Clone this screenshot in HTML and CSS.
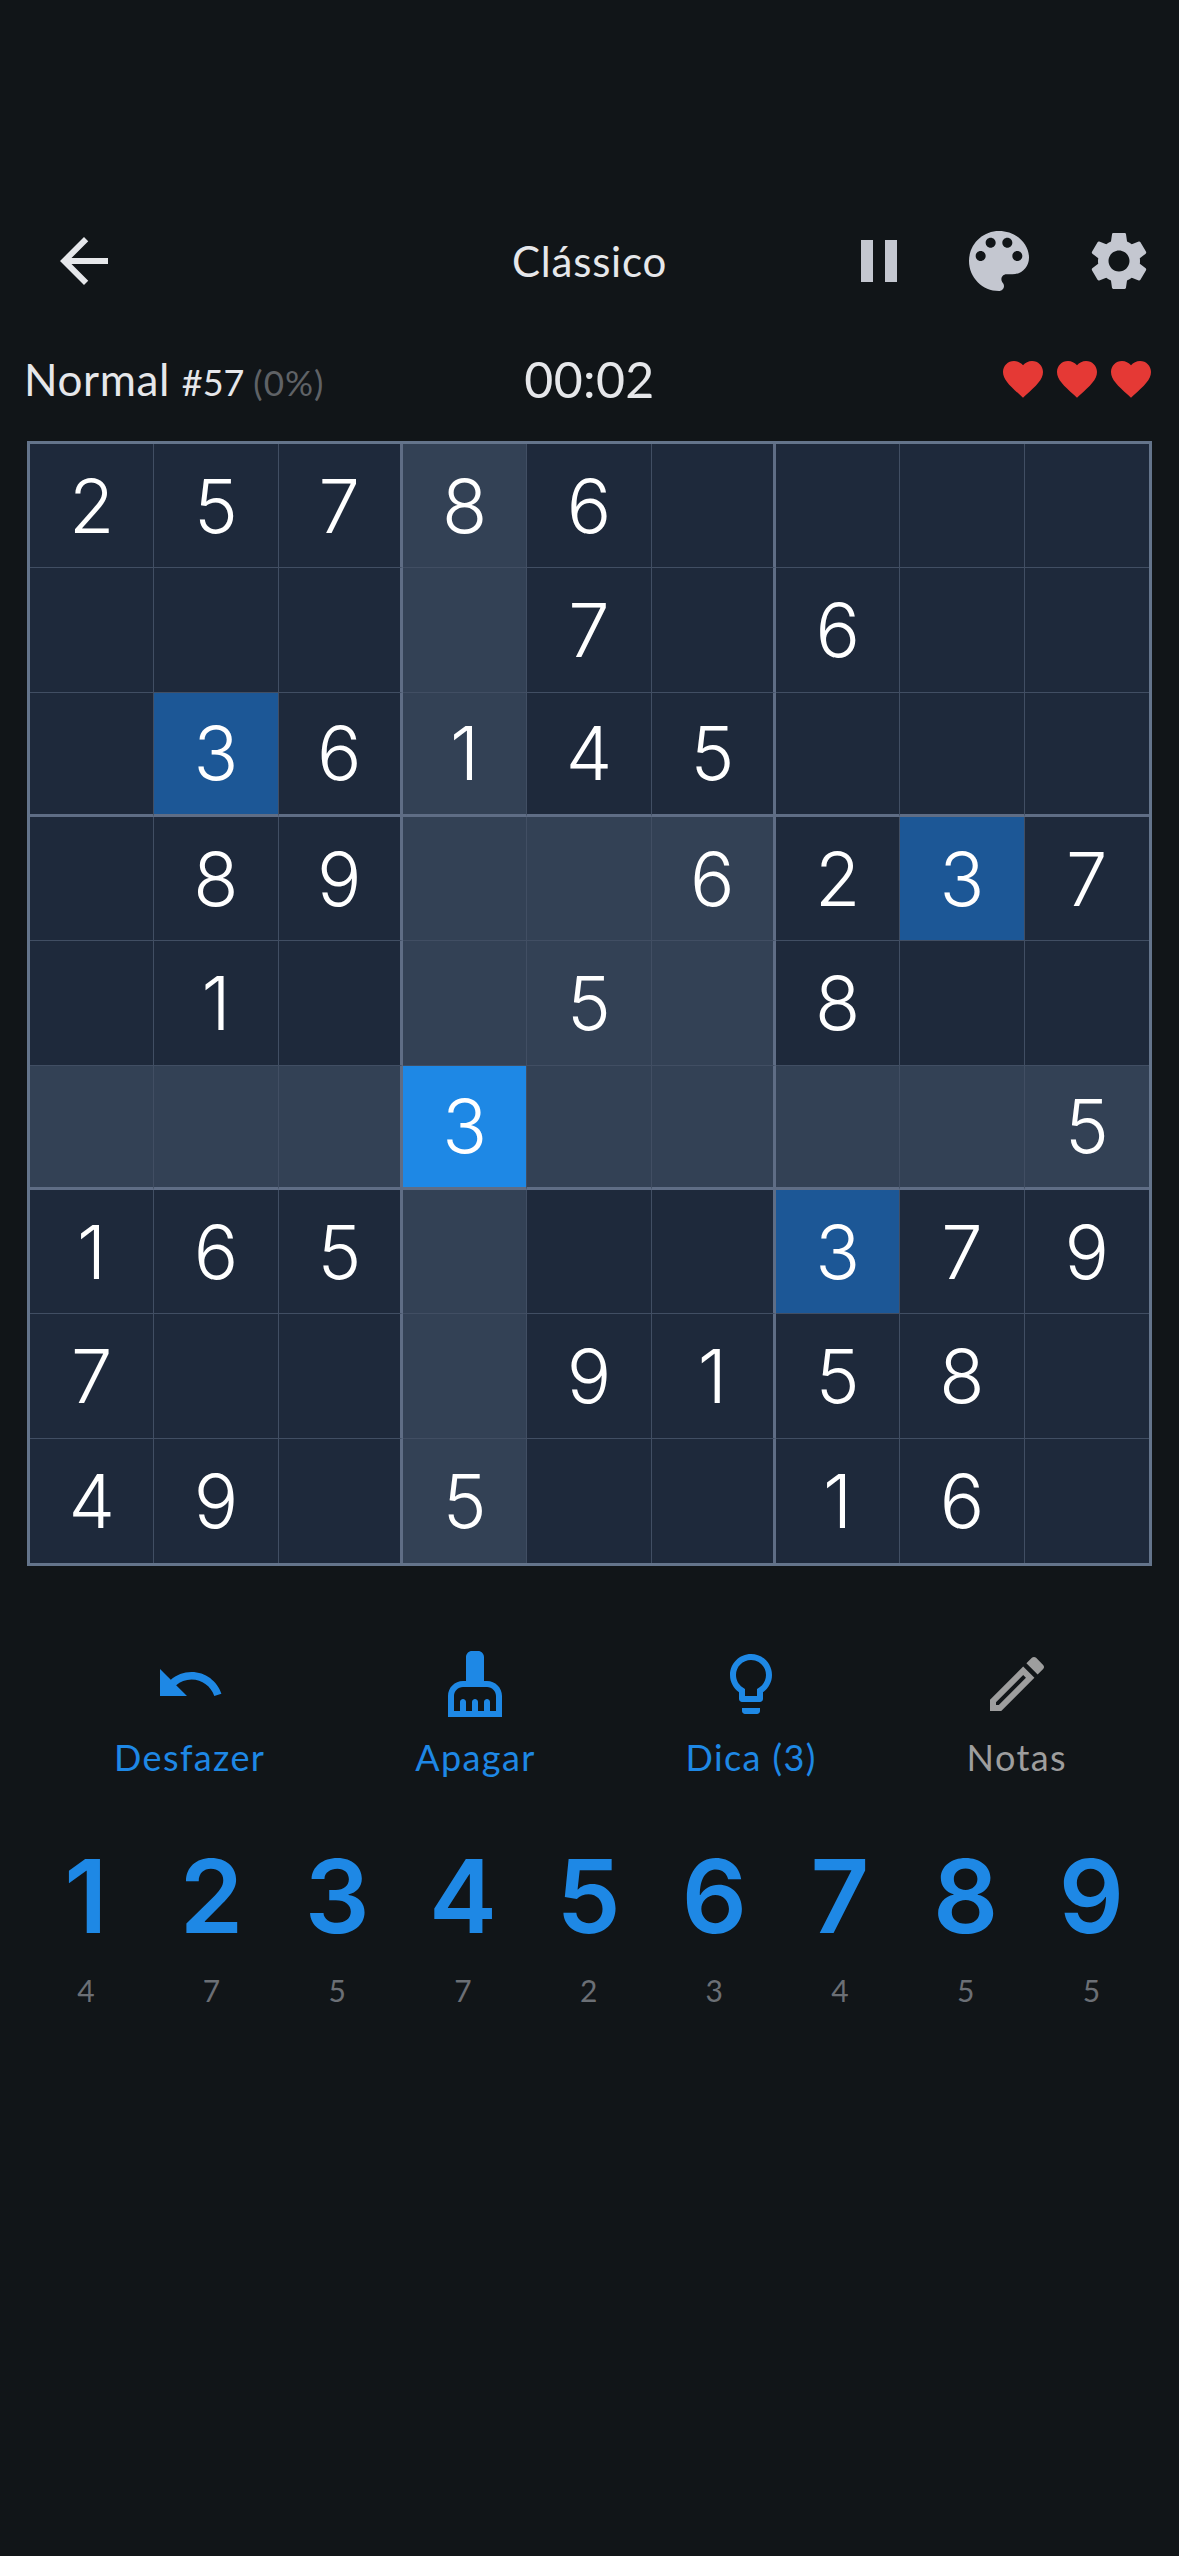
FILE: index.html
```html
<!DOCTYPE html>
<html lang="pt">
  <head>
    <meta charset="UTF-8" />
    <meta name="viewport" content="width=device-width, initial-scale=1.0" />
    <title>Sudoku</title>
    <link rel="stylesheet" href="styles.css">
  </head>
  <body>
    <header class="top-bar">
      <button class="icon-btn back-btn">
        <svg width="72" height="72" viewBox="0 0 24 24"><path d="M20 11H7.83l5.59-5.59L12 4l-8 8 8 8 1.41-1.41L7.83 13H20v-2z"/></svg>
      </button>
      <div class="title">Clássico</div>
      <div class="actions">
        <button class="icon-btn">
          <svg width="72" height="72" viewBox="0 0 24 24"><path d="M6 19h4V5H6v14zm8-14v14h4V5h-4z"/></svg>
        </button>
        <button class="icon-btn">
          <svg width="80" height="80" viewBox="0 0 24 24"><path d="M12 3c-4.97 0-9 4.03-9 9s4.03 9 9 9c.83 0 1.5-.67 1.5-1.5 0-.39-.15-.74-.39-1.01-.24-.26-.39-.61-.39-1 0-.83.67-1.5 1.5-1.5H16c2.76 0 5-2.24 5-5 0-4.42-4.03-8-9-8zm-5.5 9c-.83 0-1.5-.67-1.5-1.5S5.67 9 6.5 9 8 9.67 8 10.5 7.33 12 6.5 12zm3-4C8.67 8 8 7.33 8 6.5S8.67 5 9.5 5s1.5.67 1.5 1.5S10.33 8 9.5 8zm5 0c-.83 0-1.5-.67-1.5-1.5S13.67 5 14.5 5s1.5.67 1.5 1.5S15.33 8 14.5 8zm3 4c-.83 0-1.5-.67-1.5-1.5S16.67 9 17.5 9s1.5.67 1.5 1.5-.67 1.5-1.5 1.5z"/></svg>
        </button>
        <button class="icon-btn">
          <svg width="70" height="70" viewBox="0 0 24 24"><path d="M19.14 12.94c.04-.3.06-.61.06-.94 0-.32-.02-.64-.07-.94l2.03-1.58c.18-.14.23-.41.12-.61l-1.92-3.32c-.12-.22-.37-.29-.59-.22l-2.39.96c-.5-.38-1.03-.7-1.62-.94l-.36-2.54c-.04-.24-.24-.41-.48-.41h-3.84c-.24 0-.43.17-.47.41l-.36 2.54c-.59.24-1.13.57-1.62.94l-2.39-.96c-.22-.08-.47 0-.59.22L2.74 8.87c-.12.21-.08.47.12.61l2.03 1.58c-.05.3-.09.63-.09.94s.02.64.07.94l-2.03 1.58c-.18.14-.23.41-.12.61l1.92 3.32c.12.22.37.29.59.22l2.39-.96c.5.38 1.03.7 1.62.94l.36 2.54c.05.24.24.41.48.41h3.84c.24 0 .44-.17.47-.41l.36-2.54c.59-.24 1.13-.56 1.62-.94l2.39.96c.22.08.47 0 .59-.22l1.92-3.32c.12-.22.07-.47-.12-.61l-2.01-1.58zM12 15.6c-1.98 0-3.6-1.62-3.6-3.6s1.62-3.6 3.6-3.6 3.6 1.62 3.6 3.6-1.62 3.6-3.6 3.6z"/></svg>
        </button>
      </div>
    </header>

    <div class="status-bar">
      <div class="level">Normal <span class="game-no">#57</span> <span class="percent">(0%)</span></div>
      <div class="timer">00:02</div>
      <div class="lives">
        <svg width="48" height="48" viewBox="0 0 24 24"><path d="M12 21.35l-1.45-1.32C5.4 15.36 2 12.28 2 8.5 2 5.42 4.42 3 7.5 3c1.74 0 3.41.81 4.5 2.09C13.09 3.81 14.76 3 16.5 3 19.58 3 22 5.42 22 8.5c0 3.78-3.4 6.86-8.55 11.54L12 21.35z"/></svg>
        <svg width="48" height="48" viewBox="0 0 24 24"><path d="M12 21.35l-1.45-1.32C5.4 15.36 2 12.28 2 8.5 2 5.42 4.42 3 7.5 3c1.74 0 3.41.81 4.5 2.09C13.09 3.81 14.76 3 16.5 3 19.58 3 22 5.42 22 8.5c0 3.78-3.4 6.86-8.55 11.54L12 21.35z"/></svg>
        <svg width="48" height="48" viewBox="0 0 24 24"><path d="M12 21.35l-1.45-1.32C5.4 15.36 2 12.28 2 8.5 2 5.42 4.42 3 7.5 3c1.74 0 3.41.81 4.5 2.09C13.09 3.81 14.76 3 16.5 3 19.58 3 22 5.42 22 8.5c0 3.78-3.4 6.86-8.55 11.54L12 21.35z"/></svg>
      </div>
    </div>

    <div class="board">
      <div class="cell">2</div><div class="cell">5</div><div class="cell">7</div><div class="cell hl">8</div><div class="cell">6</div><div class="cell"></div><div class="cell"></div><div class="cell"></div><div class="cell"></div>
      <div class="cell"></div><div class="cell"></div><div class="cell"></div><div class="cell hl"></div><div class="cell">7</div><div class="cell"></div><div class="cell">6</div><div class="cell"></div><div class="cell"></div>
      <div class="cell"></div><div class="cell same">3</div><div class="cell">6</div><div class="cell hl">1</div><div class="cell">4</div><div class="cell">5</div><div class="cell"></div><div class="cell"></div><div class="cell"></div>
      <div class="cell"></div><div class="cell">8</div><div class="cell">9</div><div class="cell hl"></div><div class="cell hl"></div><div class="cell hl">6</div><div class="cell">2</div><div class="cell same">3</div><div class="cell">7</div>
      <div class="cell"></div><div class="cell">1</div><div class="cell"></div><div class="cell hl"></div><div class="cell hl">5</div><div class="cell hl"></div><div class="cell">8</div><div class="cell"></div><div class="cell"></div>
      <div class="cell hl"></div><div class="cell hl"></div><div class="cell hl"></div><div class="cell sel">3</div><div class="cell hl"></div><div class="cell hl"></div><div class="cell hl"></div><div class="cell hl"></div><div class="cell hl">5</div>
      <div class="cell">1</div><div class="cell">6</div><div class="cell">5</div><div class="cell hl"></div><div class="cell"></div><div class="cell"></div><div class="cell same">3</div><div class="cell">7</div><div class="cell">9</div>
      <div class="cell">7</div><div class="cell"></div><div class="cell"></div><div class="cell hl"></div><div class="cell">9</div><div class="cell">1</div><div class="cell">5</div><div class="cell">8</div><div class="cell"></div>
      <div class="cell">4</div><div class="cell">9</div><div class="cell"></div><div class="cell hl">5</div><div class="cell"></div><div class="cell"></div><div class="cell">1</div><div class="cell">6</div><div class="cell"></div>
    </div>

    <div class="tools">
      <div class="tool">
        <svg width="72" height="72" viewBox="0 0 24 24"><path d="M12.5 8c-2.65 0-5.05.99-6.9 2.6L2 7v9h9l-3.62-3.62c1.39-1.16 3.16-1.88 5.12-1.88 3.54 0 6.55 2.31 7.6 5.5l2.37-.78C21.08 11.03 17.15 8 12.5 8z"/></svg>
        <span>Desfazer</span>
      </div>
      <div class="tool">
        <svg width="72" height="72" viewBox="0 0 24 24"><path d="M16 11h-1V3c0-1.1-.9-2-2-2h-2c-1.1 0-2 .9-2 2v8H8c-2.76 0-5 2.24-5 5v7h18v-7c0-2.76-2.24-5-5-5zm3 10h-2v-3c0-.55-.45-1-1-1s-1 .45-1 1v3h-2v-3c0-.55-.45-1-1-1s-1 .45-1 1v3H9v-3c0-.55-.45-1-1-1s-1 .45-1 1v3H5v-5c0-1.65 1.35-3 3-3h8c1.65 0 3 1.35 3 3v5z"/></svg>
        <span>Apagar</span>
      </div>
      <div class="tool">
        <svg width="72" height="72" viewBox="0 0 24 24"><path d="M9 21c0 .55.45 1 1 1h4c.55 0 1-.45 1-1v-1H9v1zm3-19C8.14 2 5 5.14 5 9c0 2.38 1.19 4.47 3 5.74V17c0 .55.45 1 1 1h6c.55 0 1-.45 1-1v-2.26c1.81-1.27 3-3.36 3-5.74 0-3.86-3.14-7-7-7zm2.85 11.1l-.85.6V16h-4v-2.3l-.85-.6C7.8 12.16 7 10.63 7 9c0-2.76 2.24-5 5-5s5 2.24 5 5c0 1.63-.8 3.16-2.15 4.1z"/></svg>
        <span>Dica (3)</span>
      </div>
      <div class="tool off">
        <svg width="72" height="72" viewBox="0 0 24 24"><path d="M14.06 9.02l.92.92L5.92 19H5v-.92l9.06-9.06M17.66 3c-.25 0-.51.1-.7.29l-1.83 1.83 3.75 3.75 1.83-1.83c.39-.39.39-1.02 0-1.41l-2.34-2.34c-.2-.2-.45-.29-.71-.29zm-3.6 3.19L3 17.25V21h3.75L17.81 9.94l-3.75-3.75z"/></svg>
        <span>Notas</span>
      </div>
    </div>

    <div class="numpad">
      <div class="num">1<span>4</span></div>
      <div class="num">2<span>7</span></div>
      <div class="num">3<span>5</span></div>
      <div class="num">4<span>7</span></div>
      <div class="num">5<span>2</span></div>
      <div class="num">6<span>3</span></div>
      <div class="num">7<span>4</span></div>
      <div class="num">8<span>5</span></div>
      <div class="num">9<span>5</span></div>
    </div>
  </body>
</html>
```

FILE: styles.css
```css
* {
  margin: 0;
  padding: 0;
  box-sizing: border-box;
}

body {
  font-family: "Lato", sans-serif;
  background-color: #111518;
  color: #e6e7ea;
  width: 1179px;
  height: 2556px;
  overflow: hidden;
}

.icon-btn {
  background: none;
  border: none;
  display: flex;
  align-items: center;
  justify-content: center;
  fill: #c4c7d0;
}

/* top bar */
.top-bar {
  display: grid;
  grid-template-columns: 1fr auto 1fr;
  align-items: center;
  height: 120px;
  margin-top: 201px;
}

.back-btn {
  justify-self: start;
  margin-left: 48px;
  fill: #e6e7ea;
}

.title {
  font-size: 42px;
  letter-spacing: 0.8px;
}

.actions {
  display: flex;
  justify-content: flex-end;
}

.actions .icon-btn {
  width: 120px;
  height: 120px;
}

/* level, timer, hearts */
.status-bar {
  display: grid;
  grid-template-columns: 1fr auto 1fr;
  align-items: center;
  height: 120px;
  padding: 0 24px 4px 24px;
}

.level {
  font-size: 44px;
  letter-spacing: 0.6px;
  white-space: nowrap;
}

.game-no {
  font-size: 36px;
  letter-spacing: 0;
}

.percent {
  margin-left: -3px;
  font-size: 35px;
  letter-spacing: 1px;
  color: #5f6266;
}

.timer {
  font-size: 50px;
  letter-spacing: 0.4px;
}

.lives {
  display: flex;
  justify-content: flex-end;
  gap: 6px;
  fill: #e53935;
}

/* board */
.board {
  display: grid;
  grid-template-columns: repeat(9, 1fr);
  grid-template-rows: repeat(9, 1fr);
  width: 1125px;
  height: 1125px;
  margin-left: 27px;
  border: 3px solid #64748b;
  background-color: #1e293b;
}

.cell {
  display: flex;
  align-items: center;
  justify-content: center;
  font-family: "Inter", sans-serif;
  font-size: 74px;
  font-weight: 300;
  color: #ffffff;
  background-color: #1e293b;
  border-right: 1px solid #414e63;
  border-bottom: 1px solid #414e63;
}

.cell:nth-child(3n) {
  border-right: 3px solid #5f6d85;
}

.cell:nth-child(9n) {
  border-right: none;
}

.cell:nth-child(n+19):nth-child(-n+27),
.cell:nth-child(n+46):nth-child(-n+54) {
  border-bottom: 3px solid #5f6d85;
}

.cell:nth-child(n+73) {
  border-bottom: none;
}

.cell.hl {
  background-color: #334155;
}

.cell.same {
  background-color: #1c5796;
}

.cell.sel {
  background-color: #1e88e5;
}

/* tool row */
.tools {
  display: flex;
  justify-content: space-between;
  margin-top: 82px;
  padding: 0 112px 0 114px;
}

.tool {
  display: flex;
  flex-direction: column;
  align-items: center;
  font-size: 36px;
  letter-spacing: 1.4px;
  line-height: 42px;
  color: #1e88e5;
  fill: #1e88e5;
}

.tool svg {
  display: block;
  margin-bottom: 16px;
}

.tool.off {
  color: #9e9e9e;
  fill: #9e9e9e;
}

/* number pad */
.numpad {
  display: grid;
  grid-template-columns: repeat(9, 125.7px);
  margin-top: 68px;
  padding-left: 23px;
}

.num {
  display: flex;
  flex-direction: column;
  align-items: center;
  font-family: "Inter", sans-serif;
  font-size: 102px;
  font-weight: 600;
  line-height: 100px;
  color: #1e88e5;
}

.num span {
  margin-top: 26px;
  font-family: "Lato", sans-serif;
  font-size: 30px;
  font-weight: 400;
  line-height: 36px;
  color: #6b6f75;
}
```
